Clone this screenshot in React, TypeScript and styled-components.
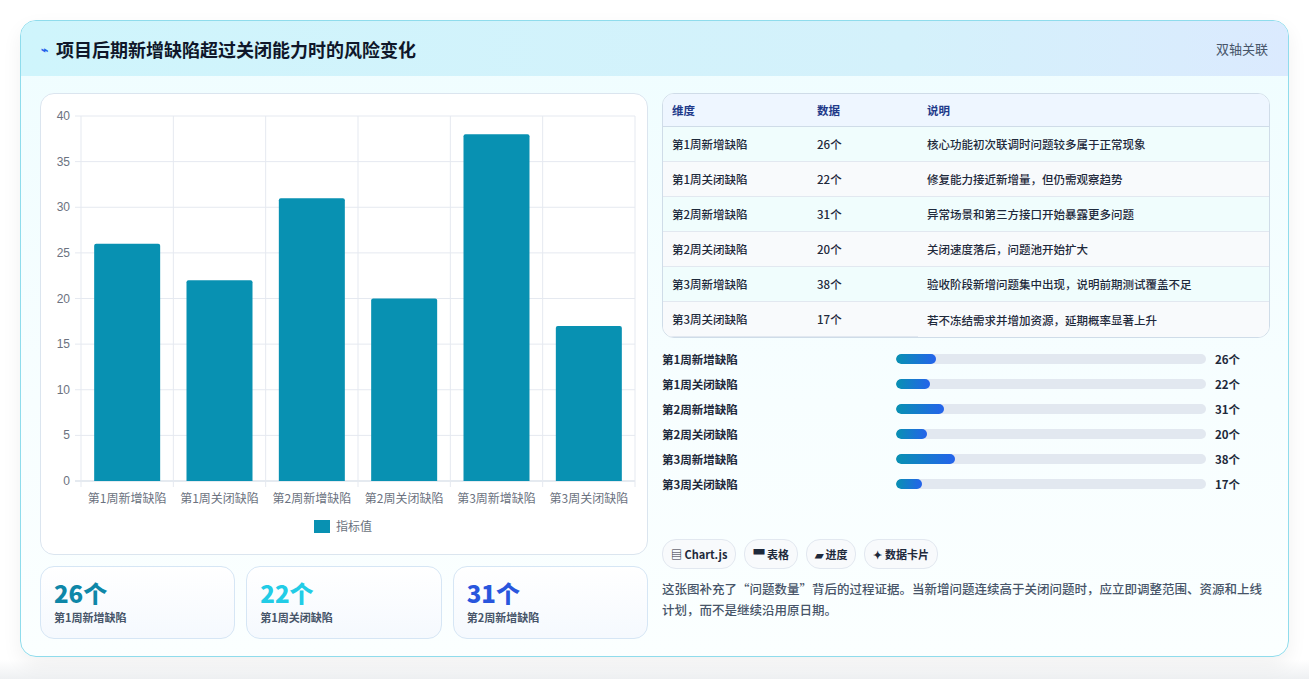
import React from "react";
import styled, { createGlobalStyle } from "styled-components";

const G = createGlobalStyle`
  body { margin:0; background:#f4f5f7; font-family: "Noto Sans CJK SC", "Noto Sans", sans-serif; }
`;
const Page = styled.div`padding:20px 20px 0 20px; height:679px; box-sizing:border-box; background:linear-gradient(#fff 0,#fff 660px,#eef0f2 679px);`;
const Card = styled.div`
  border:1px solid #8fdcec; border-radius:16px; overflow:hidden; height:637px; box-sizing:border-box;
  background:linear-gradient(180deg,#effdff,#f7feff 60%,#fbffff); box-shadow:0 8px 20px rgba(0,0,0,0.06);
`;
const Header = styled.div`
  height:55px; display:flex; align-items:center; justify-content:space-between; padding:0 20px;
  background:linear-gradient(90deg,#cff5fc,#d4f1fb 70%,#dbeafe); 
`;
const Title = styled.h1`margin:0; font-size:18px; font-weight:700; color:#0f172a; display:flex; align-items:center; gap:8px;`;
const Tag = styled.span`font-size:13px; color:#475569;`;
const Body = styled.div`display:grid; grid-template-columns:608px 608px; gap:14px; padding:17px 19px 0 19px;`;
const Col = styled.div`display:flex; flex-direction:column;`;
const ChartBox = styled.div`height:462px; box-sizing:border-box; border:1px solid #dbe5ef; border-radius:14px; background:#fff;`;
const Stats = styled.div`display:grid; grid-template-columns:repeat(3,1fr); gap:11px; margin-top:11px;`;
const Stat = styled.div`height:73px; box-sizing:border-box; border:1px solid #d6e6f5; border-radius:14px; background:linear-gradient(#fff,#f5f9fe); padding:10px 13px;`;
const StatV = styled.div<{ c: string }>`font-size:24px; font-weight:800; color:${p => p.c}; line-height:32px;`;
const StatL = styled.div`font-size:11px; color:#475569; font-weight:600;`;
const Table = styled.table`width:100%; border-collapse:separate; border-spacing:0; border:1px solid #cfdce8; border-radius:12px; overflow:hidden; font-size:11.5px; background:#fff;`;
const Th = styled.th`text-align:left; height:32px; padding:0 9px; color:#1e3a8a; font-weight:700; background:#eef6ff; border-bottom:1px solid #cfdce8;`;
const Td = styled.td<{ alt?: boolean }>`height:34px; padding:0 9px; color:#1e293b; font-weight:500; border-bottom:1px solid #e2e8f0; background:${p => p.alt ? "#f8fafc" : "#f0fdfd"};`;
const Bars = styled.div`display:flex; flex-direction:column; gap:7px; margin-top:12px;`;
const BarRow = styled.div`display:grid; grid-template-columns:225px 310px 1fr; gap:9px; align-items:center; height:18px; font-size:11.5px; font-weight:700; color:#1e293b;`;
const Track = styled.div`height:10px; background:#e2e8f0; border-radius:5px; overflow:hidden;`;
const Fill = styled.div`height:100%; border-radius:5px; background:linear-gradient(90deg,#0891b2,#2563eb);`;
const Pills = styled.div`display:flex; gap:8px; margin-top:auto;`;
const Pill = styled.span`height:28px; display:flex; align-items:center; padding:0 8px; border:1px solid #e2e8f0; border-radius:14px; background:#f8fafc; font-size:11px; font-weight:600; color:#1e293b;`;
const Para = styled.p`margin:9px 0 19px; font-size:12.5px; line-height:21px; color:#475569; font-weight:500;`;

const data: [string, number, string][] = [
  ["第1周新增缺陷", 26, "核心功能初次联调时问题较多属于正常现象"],
  ["第1周关闭缺陷", 22, "修复能力接近新增量，但仍需观察趋势"],
  ["第2周新增缺陷", 31, "异常场景和第三方接口开始暴露更多问题"],
  ["第2周关闭缺陷", 20, "关闭速度落后，问题池开始扩大"],
  ["第3周新增缺陷", 38, "验收阶段新增问题集中出现，说明前期测试覆盖不足"],
  ["第3周关闭缺陷", 17, "若不冻结需求并增加资源，延期概率显著上升"],
];

function Chart() {
  const x0 = 40, x1 = 594, y0 = 22, y1 = 387;
  const cw = (x1 - x0) / 6;
  const f = "Liberation Sans, sans-serif";
  return (
    <svg width="606" height="460">
      {[0, 5, 10, 15, 20, 25, 30, 35, 40].map(v => {
        const y = y1 - (v / 40) * (y1 - y0);
        return <g key={v}>
          <line x1={x0 - 6} x2={x1} y1={y} y2={y} stroke={v === 0 ? "#cbd5e1" : "#e5e9f0"} />
          <text x={x0 - 11} y={y + 4} textAnchor="end" fontSize="12" fill="#6b7280" fontFamily={f}>{v}</text>
        </g>;
      })}
      {Array.from({ length: 7 }).map((_, i) => <line key={i} x1={x0 + i * cw} x2={x0 + i * cw} y1={y0} y2={y1 + 6} stroke="#e5e9f0" />)}
      {data.map(([l, v], i) => {
        const h = (v / 40) * (y1 - y0);
        const cx = x0 + i * cw + cw / 2;
        return <g key={l}>
          <path d={`M${cx - 33} ${y1} V${y1 - h + 2} Q${cx - 33} ${y1 - h} ${cx - 31} ${y1 - h} H${cx + 31} Q${cx + 33} ${y1 - h} ${cx + 33} ${y1 - h + 2} V${y1}Z`} fill="#0891b2" />
          <text x={cx} y={y1 + 22} textAnchor="middle" fontSize="12" fill="#6b7280" fontFamily="Noto Sans CJK SC, sans-serif">{l}</text>
        </g>;
      })}
      <rect x="273" y="426" width="16" height="13" fill="#0891b2" />
      <text x="295" y="437" fontSize="12" fill="#6b7280" fontFamily="Noto Sans CJK SC, sans-serif">指标值</text>
    </svg>
  );
}

export default function App() {
  return (
    <Page>
      <G />
      <Card>
        <Header>
          <Title><span style={{ color: "#2563eb", fontSize: 12 }}>⌁</span>项目后期新增缺陷超过关闭能力时的风险变化</Title>
          <Tag>双轴关联</Tag>
        </Header>
        <Body>
          <Col>
            <ChartBox><Chart /></ChartBox>
            <Stats>
              <Stat><StatV c="#0e87a8">26个</StatV><StatL>第1周新增缺陷</StatL></Stat>
              <Stat><StatV c="#22cce6">22个</StatV><StatL>第1周关闭缺陷</StatL></Stat>
              <Stat><StatV c="#2956dd">31个</StatV><StatL>第2周新增缺陷</StatL></Stat>
            </Stats>
          </Col>
          <Col>
            <Table>
              <thead><tr><Th style={{ width: 127 }}>维度</Th><Th style={{ width: 92 }}>数据</Th><Th>说明</Th></tr></thead>
              <tbody>
                {data.map(([l, v, d], i) => <tr key={l}><Td alt={i % 2 === 1}>{l}</Td><Td alt={i % 2 === 1}>{v}个</Td><Td alt={i % 2 === 1} style={i === 5 ? { borderBottom: 0 } : undefined}>{d}</Td></tr>)}
              </tbody>
            </Table>
            <Bars>
              {data.map(([l, v]) => <BarRow key={l}><span>{l}</span><Track><Fill style={{ width: `${(v / 200) * 100}%` }} /></Track><span>{v}个</span></BarRow>)}
            </Bars>
            <Pills>
              <Pill>▤ Chart.js</Pill><Pill>▀ 表格</Pill><Pill>▰ 进度</Pill><Pill>✦ 数据卡片</Pill>
            </Pills>
            <Para>这张图补充了“问题数量”背后的过程证据。当新增问题连续高于关闭问题时，应立即调整范围、资源和上线计划，而不是继续沿用原日期。</Para>
          </Col>
        </Body>
      </Card>
    </Page>
  );
}
